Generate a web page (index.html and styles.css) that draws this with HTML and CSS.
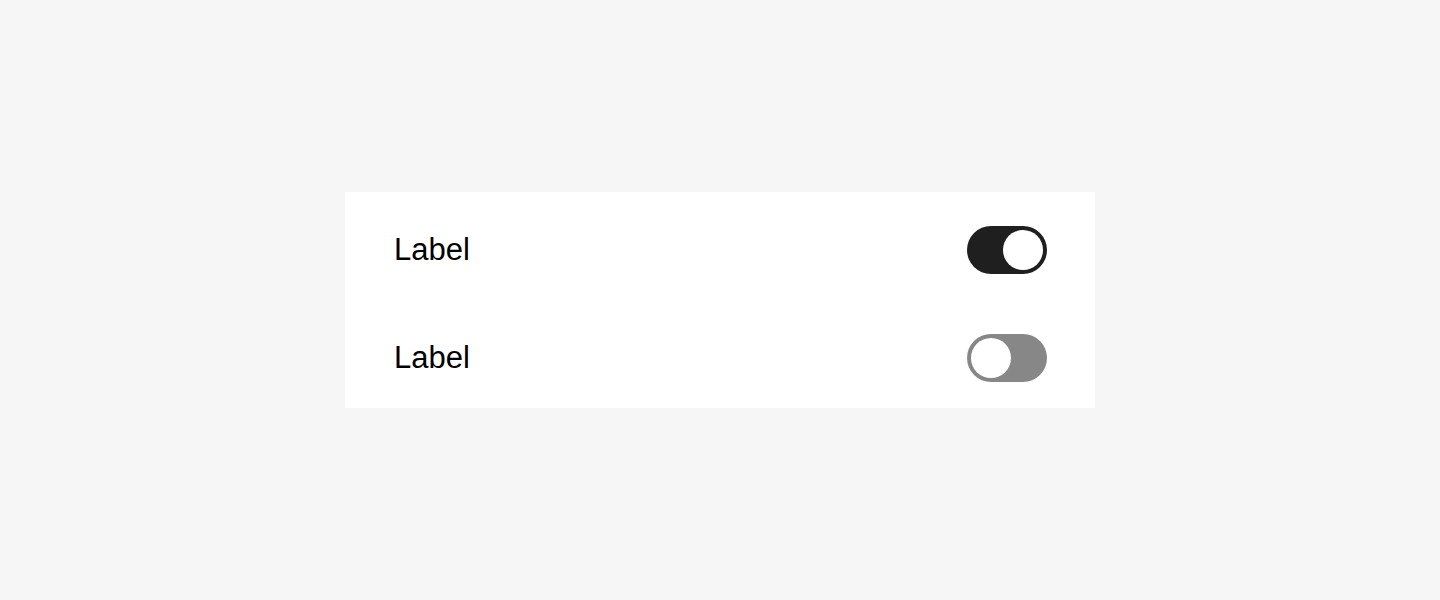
FILE: index.html
```html
<!DOCTYPE html>
<html>
<head>
  <title>Toggles</title>
  <link rel="stylesheet" href="styles.css">
</head>
<body>

  <div class="page">
    <div class="card">
      <div class="row">
        <span class="label">Label</span>
        <span class="switch on"><span class="knob"></span></span>
      </div>
      <div class="row">
        <span class="label">Label</span>
        <span class="switch"><span class="knob"></span></span>
      </div>
    </div>
  </div>

</body>
</html>
```

FILE: styles.css
```css
body {
  margin: 0;
  background: #f6f6f6;
  font-family: 'Liberation Sans', Arial, sans-serif;
}

.page {
  height: 600px;
  display: flex;
  justify-content: center;
  padding-top: 192px;
  box-sizing: border-box;
}

.card {
  background: #fff;
  width: 750px;
  height: 216px;
  box-sizing: border-box;
  padding: 34px 48px 26px 49px;
  display: flex;
  flex-direction: column;
  gap: 60px;
}

.row {
  height: 48px;
  display: flex;
  align-items: center;
  justify-content: space-between;
}

.label {
  font-size: 31px;
  color: #000;
}

/* Switch */
.switch {
  width: 80px;
  height: 48px;
  border-radius: 24px;
  background: #878787;
  padding: 4px;
  box-sizing: border-box;
  display: flex;
}

.switch.on {
  background: #1f1f1f;
  justify-content: flex-end;
}

.knob {
  width: 40px;
  height: 40px;
  border-radius: 50%;
  background: #fff;
}
```
